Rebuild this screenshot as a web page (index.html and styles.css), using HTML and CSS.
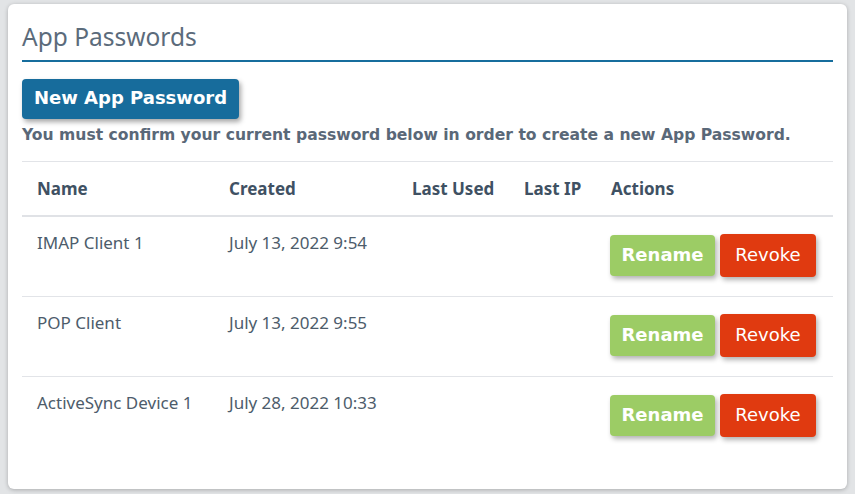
FILE: index.html
```html
<!DOCTYPE html>
<html>
<head>
<meta charset="utf-8">
<link rel="stylesheet" href="styles.css">
</head>
<body>
<div class="card">
  <h2 class="title">App Passwords</h2>
  <button class="btn-new">New App Password</button>
  <p class="note">You must confirm your current password below in order to create a new App Password.</p>
  <table class="tbl">
    <thead>
      <tr><th class="c-name">Name</th><th class="c-created">Created</th><th class="c-used">Last Used</th><th class="c-ip">Last IP</th><th>Actions</th></tr>
    </thead>
    <tbody>
      <tr><td>IMAP Client 1</td><td>July 13, 2022 9:54</td><td></td><td></td><td class="actions"><button class="btn-rename">Rename</button><button class="btn-revoke">Revoke</button></td></tr>
      <tr><td>POP Client</td><td>July 13, 2022 9:55</td><td></td><td></td><td class="actions"><button class="btn-rename">Rename</button><button class="btn-revoke">Revoke</button></td></tr>
      <tr><td>ActiveSync Device 1</td><td>July 28, 2022 10:33</td><td></td><td></td><td class="actions"><button class="btn-rename">Rename</button><button class="btn-revoke">Revoke</button></td></tr>
    </tbody>
  </table>
</div>
</body>
</html>
```
FILE: styles.css
```css
html, body { margin: 0; padding: 0; }
body {
  background: #e2e4e6;
  font-family: "Noto Sans", "Open Sans", sans-serif;
  color: #4d5c6b;
  padding: 4px 8px 0 8px;
  height: 494px;
  box-sizing: border-box;
}
.card {
  background: #fff;
  border-radius: 6px;
  box-shadow: 0 1px 4px rgba(0,0,0,0.25);
  height: 485px;
  padding: 19px 14px 0 14px;
  box-sizing: border-box;
}
.title {
  margin: 0;
  font-weight: normal;
  font-size: 24.5px;
  line-height: 28px;
  color: #5b6b7b;
  padding-bottom: 9px;
  border-bottom: 2px solid #166d9d;
}
.btn-new {
  margin-top: 17px;
  display: block;
  background: #176c9c;
  color: #fff;
  border: none;
  border-radius: 4px;
  height: 40px;
  width: 217px;
  font-family: "DejaVu Sans", sans-serif;
  font-weight: bold;
  font-size: 18px;
  box-shadow: 2px 3px 5px rgba(0,0,0,0.35);
  padding: 0 0 3px 0;
}
.note {
  margin: 6px 0 0 0;
  font-family: "DejaVu Sans", sans-serif;
  font-weight: bold;
  font-size: 15.6px;
  line-height: 20px;
  color: #5a6878;
  padding-bottom: 16px;
  border-bottom: 1px solid #e2e4e8;
}
.tbl {
  width: 100%;
  border-collapse: collapse;
  font-size: 17px;
}
.tbl th {
  text-align: left;
  font-weight: bold;
  color: #3f5163;
  height: 53px;
  padding: 0 0 0 15px;
  border-bottom: 2px solid #e0e2e6;
  font-family: "Noto Sans", sans-serif;
}
.c-name { width: 177px; }
.c-created { width: 168px; }
.c-used { width: 97px; }
.c-ip { width: 72px; }
.tbl td {
  vertical-align: top;
  padding: 14px 0 0 15px;
  height: 65px;
  box-sizing: border-box;
  border-bottom: 1px solid #e2e4e8;
  color: #4d5c6b;
  line-height: 24px;
}
.tbl tbody tr { height: 80px; }
.tbl tbody tr:last-child td { border-bottom: none; }
.tbl td.actions {
  padding: 17px 0 0 14px;
  white-space: nowrap;
}
.actions button {
  height: 41px;
  border: none;
  border-radius: 4px;
  color: #fff;
  font-family: "DejaVu Sans", sans-serif;
  font-size: 18px;
  box-shadow: 2px 3px 5px rgba(0,0,0,0.3);
  vertical-align: top;
  padding: 0 0 2px 0;
}
.btn-rename {
  background: #9ccc65;
  font-weight: bold;
  width: 105px;
  margin-right: 5px;
  margin-top: 1px;
}
.btn-revoke {
  background: #e03a10;
  width: 96px;
  height: 43px !important;
}
```
